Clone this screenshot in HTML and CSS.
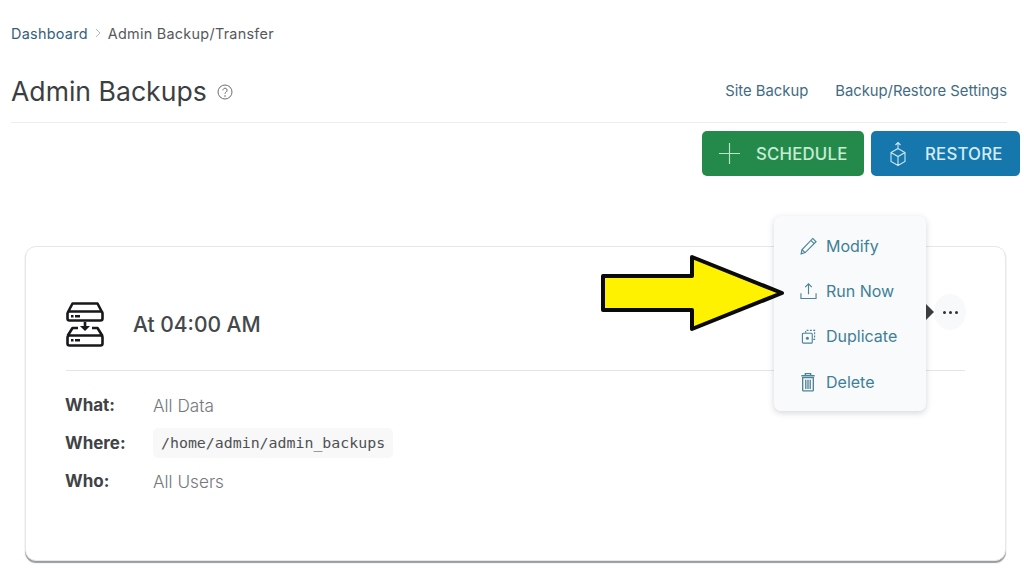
FILE: index.html
```html
<!DOCTYPE html>
<html lang="en">
<head>
<meta charset="utf-8">
<title>Admin Backups</title>
<link rel="stylesheet" href="styles.css">
</head>
<body>
<div class="page">
  <nav class="crumbs">
    <a class="crumb-link">Dashboard</a>
    <svg class="crumb-sep" viewBox="0 0 8 12"><path d="M2 2l4 4-4 4"/></svg>
    <span class="crumb-current">Admin Backup/Transfer</span>
  </nav>
  <header class="head">
    <div class="title-wrap">
      <h1 class="title">Admin Backups</h1>
      <svg class="help" viewBox="0 0 16 16"><circle cx="8" cy="8" r="7"/><path d="M5.900 6.300a2.100 2.100 0 1 1 3.300 1.700c-.8.500-1.200.900-1.200 1.800"/><circle class="help-dot" cx="8" cy="12" r=".8"/></svg>
    </div>
    <div class="head-links">
      <a class="head-link">Site Backup</a>
      <a class="head-link">Backup/Restore Settings</a>
    </div>
  </header>
  <div class="actions">
    <button class="btn btn-green">
      <svg class="btn-plus" viewBox="0 0 22 22"><path d="M11 0v22M0 11h22"/></svg>
      <span>SCHEDULE</span>
    </button>
    <button class="btn btn-blue">
      <svg class="btn-box" viewBox="0 0 16 24"><path d="M8 7l7 4v9l-7 4-7-4v-9zM1 11l7 4 7-4M8 15v9M8 8V1M5.500 3.500L8 1l2.500 2.500"/></svg>
      <span>RESTORE</span>
    </button>
  </div>
  <section class="card">
    <div class="card-head">
      <svg class="server" viewBox="0 0 38 46">
        <path class="s-line" d="M1.500 12l5-9.500h25l5 9.500M3.500 10.500h31a2 2 0 0 1 2 2v5a2 2 0 0 1-2 2h-31a2 2 0 0 1-2-2v-5a2 2 0 0 1 2-2z"/>
        <path class="s-fill" d="M5 14h2.500v2.500H5zM9 14h5v2.500H9zM5 38h2.500v2.500H5zM9 38h5v2.500H9zM17.700 21h2.600v4H24l-5 5-5-5h3.700z"/>
        <path class="s-line" d="M12 27H6.500l-5 8M26 27h5.500l5 8M3.500 34.500h31a2 2 0 0 1 2 2v6a2 2 0 0 1-2 2h-31a2 2 0 0 1-2-2v-6a2 2 0 0 1 2-2z"/>
      </svg>
      <h2 class="card-title">At 04:00 AM</h2>
      <div class="more-wrap">
        <span class="more-caret"></span>
        <span class="more"><i></i><i></i><i></i></span>
      </div>
    </div>
    <dl class="details">
      <div class="row"><dt>What:</dt><dd>All Data</dd></div>
      <div class="row"><dt>Where:</dt><dd><code class="path">/home/admin/admin_backups</code></dd></div>
      <div class="row"><dt>Who:</dt><dd>All Users</dd></div>
    </dl>
  </section>
</div>
<ul class="menu">
  <li class="menu-item">
    <svg class="mi" viewBox="0 0 18 18"><path d="M13.500 1l3.500 3.500L5.500 16 1.200 17.300 2 13zM11.500 3L15 6.500M2 13l3.500 3"/></svg>
    <span>Modify</span>
  </li>
  <li class="menu-item">
    <svg class="mi" viewBox="0 0 18 18"><path d="M9 12.500V1.500M5.500 5L9 1.500 12.500 5M1 11.500v5.500h16v-5.500"/></svg>
    <span>Run Now</span>
  </li>
  <li class="menu-item">
    <svg class="mi mi-sm" viewBox="0 0 16 16"><path class="mi-dash" d="M5 4V1.500h9.500V11H12"/><path d="M2.500 4.500H11a1 1 0 0 1 1 1V14a1 1 0 0 1-1 1H2.500a1 1 0 0 1-1-1V5.500a1 1 0 0 1 1-1z"/><circle class="mi-dot" cx="6.800" cy="9.800" r="1.600"/></svg>
    <span>Duplicate</span>
  </li>
  <li class="menu-item">
    <svg class="mi mi-trash" viewBox="0 0 18 22"><path d="M3 6h12v14a1 1 0 0 1-1 1H4a1 1 0 0 1-1-1zM1.500 4h15M6 3.500V1.500h6v2M6.500 8.500V19M9 8.500V19M11.500 8.500V19"/></svg>
    <span>Delete</span>
  </li>
</ul>
<svg class="arrow" viewBox="0 0 186 78"><path d="M3 22H92V3L182 39 92 75V56H3z"/></svg>
</body>
</html>
```
FILE: styles.css
```css
* { box-sizing: border-box; }
html, body { margin: 0; height: 100%; }
body {
  position: relative;
  width: 1024px;
  height: 576px;
  overflow: hidden;
  background: #fff;
  color: #3f4346;
  font-family: Inter, "Open Sans", sans-serif;
}
.page { padding: 24px 17px 0 11px; }
.crumbs {
  display: flex;
  align-items: center;
  height: 18px;
  font-size: 14.400px;
  letter-spacing: 0.28px;
}
.crumb-link { color: #33617a; }
.crumb-sep {
  width: 8px;
  height: 12px;
  margin: 0 6px;
  fill: none;
  stroke: #b5b9bc;
  stroke-width: 1;
}
.crumb-current { color: #56595c; }
.head {
  display: flex;
  justify-content: space-between;
  align-items: center;
  height: 81px;
  padding-top: 32px;
  padding-bottom: 14px;
  border-bottom: 1px solid #eceded;
}
.title-wrap { display: flex; align-items: center; gap: 10px; }
.title {
  margin: 0;
  font-size: 26.600px;
  font-weight: 400;
  line-height: 34px;
  color: #3c3f42;
}
.help {
  width: 16px;
  height: 16px;
  margin-top: 2px;
  fill: none;
  stroke: #6a6e71;
  stroke-width: 1;
}
.help-dot { fill: #6a6e71; stroke: none; }
.head-links { display: flex; gap: 27px; }
.head-link {
  color: #3f6b83;
  font-size: 14.800px;
}
.actions {
  display: flex;
  justify-content: flex-end;
  gap: 7px;
  margin: 8px -13px 0 0;
}
.btn {
  display: flex;
  align-items: center;
  height: 45px;
  padding: 0;
  border: 0;
  border-radius: 5px;
  color: #c9ecd6;
  font-family: inherit;
  font-size: 16.800px;
  font-weight: 500;
  letter-spacing: 0.2px;
}
.btn-green { width: 162px; background: #248a4b; padding-left: 17px; gap: 16px; }
.btn-blue { width: 149px; background: #1577ab; padding-left: 19px; gap: 19px; color: #d3ecf8; }
.btn-plus {
  width: 21px;
  height: 21px;
  fill: none;
  stroke: #b9e6c9;
  stroke-width: 1.200;
}
.btn-box {
  width: 16px;
  height: 25px;
  fill: none;
  stroke: #cfe8f5;
  stroke-width: 1.100;
}
.card {
  height: 315px;
  margin: 70px 1px 0 14px;
  padding: 0 40px;
  border: 1px solid #e6e7e8;
  border-radius: 11px;
  box-shadow: 0 2px 1px #9a9c9e;
  background: #fff;
}
.card-head {
  display: flex;
  align-items: center;
  height: 124px;
  padding-top: 31px;
  border-bottom: 1px solid #e4e5e6;
}
.server { width: 38px; height: 46px; flex: none; }
.s-line { fill: none; stroke: #16181a; stroke-width: 2.600; stroke-linejoin: round; }
.s-fill { fill: #16181a; }
.card-title {
  margin: 0 0 0 29px;
  font-size: 21px;
  font-weight: 500;
  color: #44484b;
}
.more-wrap {
  display: flex;
  align-items: center;
  margin-left: auto;
  margin-top: -24px;
  transform: translateX(1px);
}
.more-caret {
  width: 0;
  height: 0;
  border-left: 8px solid #3b3e41;
  border-top: 8px solid transparent;
  border-bottom: 8px solid transparent;
}
.more {
  display: flex;
  align-items: center;
  justify-content: center;
  gap: 3px;
  width: 32px;
  height: 36px;
  border-radius: 50%;
  background: #f8f9fa;
}
.more i {
  width: 3px;
  height: 3px;
  border-radius: 50%;
  background: #2f3234;
}
.details { margin: 15px 0 0 -1px; }
.row {
  display: flex;
  align-items: center;
  height: 38px;
  font-size: 17.200px;
}
.row dt {
  width: 88px;
  font-weight: 700;
  color: #3f4346;
  font-size: 17px;
}
.row dd { margin: 0; color: #74787b; font-weight: 300; }
.path {
  display: block;
  padding: 0 8px;
  line-height: 30px;
  border-radius: 5px;
  background: #f8f8f8;
  color: #4d5154;
  font-family: "DejaVu Sans Mono", monospace;
  font-size: 14.900px;
  font-weight: 400;
}
.menu {
  position: absolute;
  left: 774px;
  top: 216px;
  width: 152px;
  height: 195px;
  margin: 0;
  padding: 7px 0 0 26px;
  list-style: none;
  background: #f8fafb;
  border-radius: 7px;
  box-shadow: 0 2px 6px rgba(60, 70, 80, 0.22);
}
.menu-item {
  display: flex;
  align-items: center;
  gap: 9px;
  height: 45.300px;
  color: #3f7f97;
  font-size: 16px;
  font-weight: 400;
}
.mi {
  width: 17px;
  height: 18px;
  flex: none;
  fill: none;
  stroke: #4d8299;
  stroke-width: 1.200;
}
.mi-sm { width: 15px; height: 15px; margin: 0 1px; }
.mi-trash { width: 16px; height: 20px; margin-right: 1px; stroke-width: 1.500; }
.mi-dash { stroke-dasharray: 2 1.500; }
.mi-dot { fill: #4d8299; stroke: none; }
.arrow {
  position: absolute;
  left: 600px;
  top: 254px;
  width: 186px;
  height: 78px;
  fill: #fff200;
  stroke: #0a0a0a;
  stroke-width: 4;
  stroke-linejoin: round;
}
```
